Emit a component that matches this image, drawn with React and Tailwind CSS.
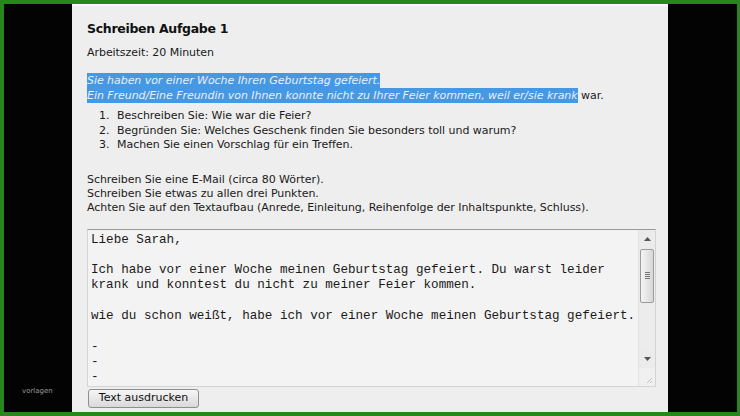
export default function App() {
  const ui = { fontFamily: '"DejaVu Sans", Verdana, sans-serif' };
  const mono = { fontFamily: '"Liberation Mono", "Courier New", monospace' };
  return (
    <div className="w-[740px] h-[416px] bg-[#27871c] pt-[4px] pl-[4px] pr-[3px] pb-[4px] overflow-hidden">
      <div className="flex h-full">
        <div className="w-[68px] h-full bg-[#030303] relative">
          <span className="absolute left-[18px] top-[382px] text-[7px] text-[#9a9a9a]" style={ui}>vorlagen</span>
        </div>
        <div className="w-[596px] h-full bg-[#eeeeee] border-t-2 border-[#f8f8f8] pl-[15px] pr-[11px] text-[#1a1a1a]" style={ui}>
          <div className="pt-[15px] text-[12.5px] font-bold leading-[16px] tracking-[-0.3px] text-[#111]">Schreiben Aufgabe 1</div>
          <div className="mt-[9px] text-[11px] leading-[14px] tracking-[-0.05px]">Arbeitszeit: 20 Minuten</div>
          <div className="mt-[14px] text-[11px] leading-[14.5px] tracking-[-0.05px] italic">
            <div><span className="bg-[#4598e4] text-[#e6f0ff] py-[1px]">Sie haben vor einer Woche Ihren Geburtstag gefeiert.</span></div>
            <div><span className="bg-[#4598e4] text-[#e6f0ff] py-[1px]">Ein Freund/Eine Freundin von Ihnen konnte nicht zu Ihrer Feier kommen, weil er/sie krank</span><span className="not-italic"> war.</span></div>
          </div>
          <ol className="mt-[6px] text-[11px] leading-[14.5px] tracking-[-0.05px]">
            <li className="flex"><span className="w-[30px] pl-[12px]">1.</span><span>Beschreiben Sie: Wie war die Feier?</span></li>
            <li className="flex"><span className="w-[30px] pl-[12px]">2.</span><span>Begründen Sie: Welches Geschenk finden Sie besonders toll und warum?</span></li>
            <li className="flex"><span className="w-[30px] pl-[12px]">3.</span><span>Machen Sie einen Vorschlag für ein Treffen.</span></li>
          </ol>
          <div className="mt-[20px] text-[11px] leading-[14px] tracking-[-0.05px]">
            <div>Schreiben Sie eine E-Mail (circa 80 Wörter).</div>
            <div>Schreiben Sie etwas zu allen drei Punkten.</div>
            <div>Achten Sie auf den Textaufbau (Anrede, Einleitung, Reihenfolge der Inhaltspunkte, Schluss).</div>
          </div>
          <div className="mt-[14px] w-[569px] h-[158px] border border-[#d4d4d4] border-t-[#9a9a9a] bg-[#f3f3f3] flex">
            <div className="flex-1 pl-[3px] pt-[3px] text-[12.6px] leading-[15.3px] text-[#1a1a1a] whitespace-pre" style={mono}>
              {"Liebe Sarah,\n\nIch habe vor einer Woche meinen Geburtstag gefeiert. Du warst leider\nkrank und konntest du nicht zu meiner Feier kommen.\n\nwie du schon weißt, habe ich vor einer Woche meinen Geburtstag gefeiert.\n\n-\n-\n-"}
            </div>
            <div className="w-[17px] h-full flex flex-col bg-[#ebebeb] border-l border-[#e2e2e2]">
              <div className="h-[19px] flex items-center justify-center">
                <svg width="7" height="4" viewBox="0 0 7 4"><path d="M3.5 0 L7 4 L0 4 Z" fill="#555" /></svg>
              </div>
              <div className="mx-[1px] h-[54px] rounded-[2px] border border-[#9c9c9c] bg-gradient-to-r from-[#f4f4f4] to-[#d8d8d8] flex items-center justify-center">
                <div className="flex flex-col gap-[1px]">
                  <div className="w-[5px] h-[1px] bg-[#777]" />
                  <div className="w-[5px] h-[1px] bg-[#777]" />
                  <div className="w-[5px] h-[1px] bg-[#777]" />
                  <div className="w-[5px] h-[1px] bg-[#777]" />
                </div>
              </div>
              <div className="flex-1 bg-[#ececec]" />
              <div className="h-[18px] flex items-center justify-center">
                <svg width="7" height="4" viewBox="0 0 7 4"><path d="M0 0 L7 0 L3.5 4 Z" fill="#555" /></svg>
              </div>
              <div className="h-[18px] bg-[#f0f0f0] flex items-end justify-end pr-[2px] pb-[2px]">
                <svg width="8" height="8" viewBox="0 0 8 8"><path d="M7 2 L2 7 M7 5 L5 7" stroke="#c4c4c4" strokeWidth="1" /></svg>
              </div>
            </div>
          </div>
          <div className="mt-[2px] ml-[1px] w-[111px] h-[19px] rounded-[3px] border border-[#8e8e8e] bg-gradient-to-b from-[#f6f6f6] to-[#d9d9d9] flex items-center justify-center text-[11px] text-[#111]">Text ausdrucken</div>
        </div>
        <div className="flex-1 h-full bg-[#030303]" />
      </div>
    </div>
  );
}
